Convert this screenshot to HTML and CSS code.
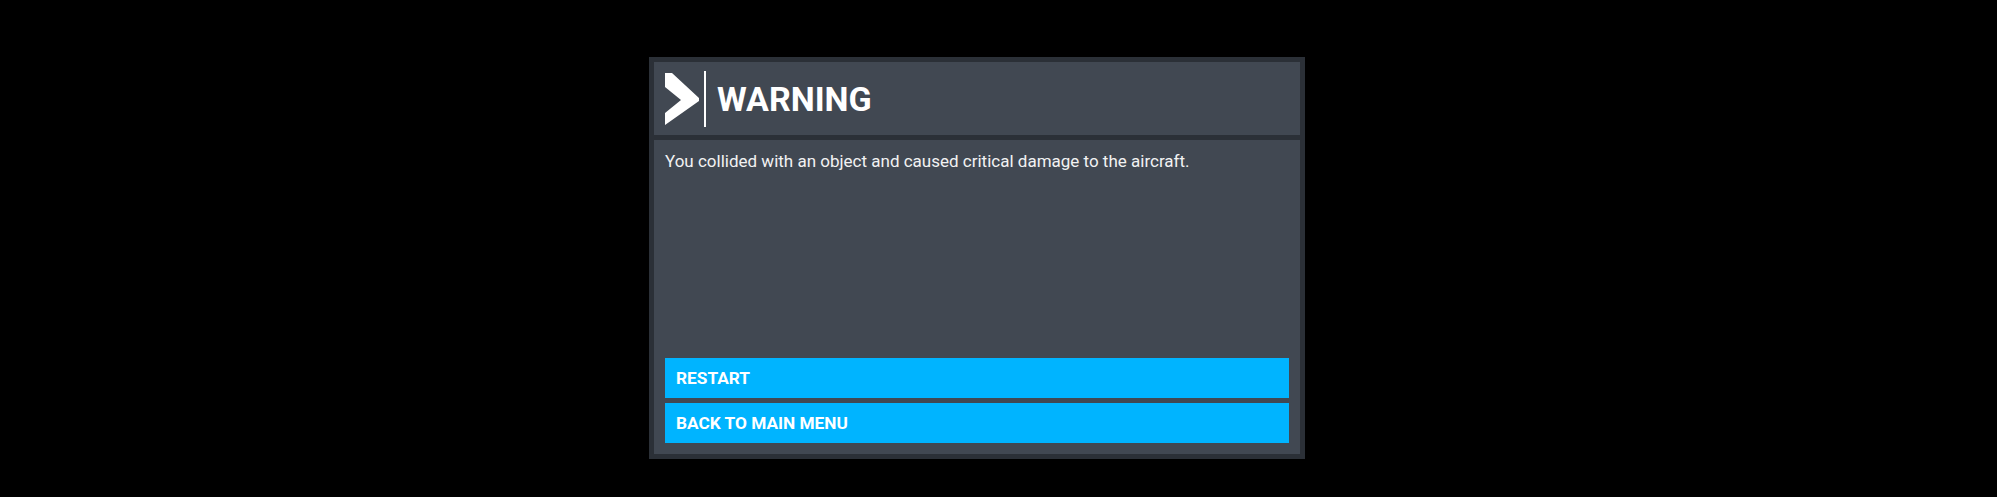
FILE: index.html
```html
<!DOCTYPE html>
<html>
<head>
<meta charset="utf-8">
<link rel="stylesheet" href="styles.css">
</head>
<body>
<div class="dialog">
  <div class="header">
    <svg class="logo" width="35" height="52" viewBox="0 0 35 52">
      <polygon points="0,0 7,0 34,25 34,28 0,52 0,40 16,27 0,14" fill="#ffffff"/>
    </svg>
    <div class="divider"></div>
    <h1 class="title">WARNING</h1>
  </div>
  <div class="body">
    <p class="message">You collided with an object and caused critical damage to the aircraft.</p>
    <div class="actions">
      <button class="btn">RESTART</button>
      <button class="btn">BACK TO MAIN MENU</button>
    </div>
  </div>
</div>
</body>
</html>
```
FILE: styles.css
```css
html, body {
  margin: 0;
  padding: 0;
  background: #000000;
  width: 1997px;
  height: 497px;
  overflow: hidden;
}
body {
  font-family: Roboto, "Liberation Sans", sans-serif;
  padding: 57px 0 0 649px;
  box-sizing: border-box;
}
.dialog {
  width: 656px;
  height: 402px;
  box-sizing: border-box;
  background: #2b3037;
  padding: 5px;
  display: flex;
  flex-direction: column;
  gap: 5px;
}
.header {
  height: 73px;
  background: #414852;
  display: flex;
  align-items: center;
  padding-left: 11px;
  flex-shrink: 0;
}
.logo {
  display: block;
  flex-shrink: 0;
}
.divider {
  width: 2px;
  height: 56px;
  background: #ffffff;
  margin-left: 4px;
  flex-shrink: 0;
}
.title {
  margin: 0 0 0 11px;
  color: #ffffff;
  font-size: 34px;
  font-weight: 700;
  line-height: 40px;
}
.body {
  flex: 1;
  background: #414852;
  padding: 11px 11px 11px 11px;
  display: flex;
  flex-direction: column;
  justify-content: space-between;
}
.message {
  margin: 0;
  color: #f2f2f2;
  font-size: 17px;
  line-height: 20px;
}
.actions {
  display: flex;
  flex-direction: column;
  gap: 5px;
}
.btn {
  display: block;
  width: 100%;
  height: 40px;
  border: none;
  margin: 0;
  background: #00b4ff;
  color: #ffffff;
  font-family: Roboto, "Liberation Sans", sans-serif;
  font-size: 17.25px;
  font-weight: 700;
  text-align: left;
  padding: 0 0 0 11px;
  line-height: 39px;
}
```
